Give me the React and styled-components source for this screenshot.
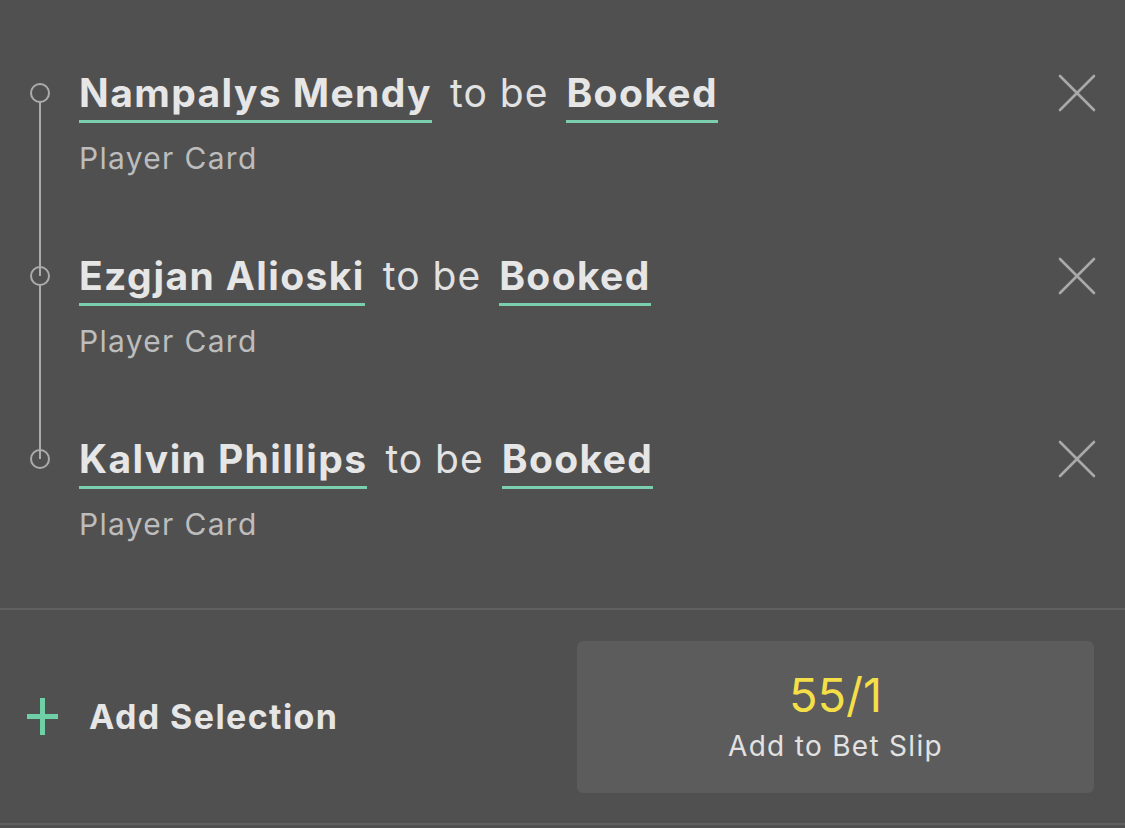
import React from 'react';
import styled, { createGlobalStyle } from 'styled-components';

const GlobalStyle = createGlobalStyle`
  html, body {
    margin: 0;
    padding: 0;
    background: #505050;
  }
  body {
    font-family: Inter, "Noto Sans", "Liberation Sans", sans-serif;
    -webkit-font-smoothing: antialiased;
  }
`;

const selections = [
  { player: 'Nampalys Mendy', market: 'Player Card' },
  { player: 'Ezgjan Alioski', market: 'Player Card' },
  { player: 'Kalvin Phillips', market: 'Player Card' },
];

function App() {
  return (
    <Page>
      <GlobalStyle />
      <List>
        {selections.map((s, i) => (
          <Row key={s.player} last={i === selections.length - 1}>
            <Marker>
              <Dot />
            </Marker>
            <Body>
              <Title>
                <Pick>{s.player}</Pick>
                <Joiner>to be</Joiner>
                <Pick>Booked</Pick>
              </Title>
              <Market>{s.market}</Market>
            </Body>
            <CloseButton aria-label="Remove">
              <svg width="38" height="38" viewBox="0 0 38 38">
                <path d="M2 2 L36 36 M36 2 L2 36" stroke="#a9a9a9" strokeWidth="2.6" strokeLinecap="round" />
              </svg>
            </CloseButton>
          </Row>
        ))}
      </List>
      <Footer>
        <AddSelection>
          <PlusIcon>
            <svg width="31" height="37" viewBox="0 0 31 37">
              <path d="M15.5 0 V37 M0 18.5 H31" stroke="#6fcfa7" strokeWidth="5" />
            </svg>
          </PlusIcon>
          Add Selection
        </AddSelection>
        <BetButton>
          <Odds>55/1</Odds>
          <BetLabel>Add to Bet Slip</BetLabel>
        </BetButton>
      </Footer>
    </Page>
  );
}

export default App;

const Page = styled.div`
  width: 1125px;
  height: 828px;
  background: #505050;
  overflow: hidden;
`;

const List = styled.div`
  height: 537px;
  padding-top: 71px;
  border-bottom: 2px solid #5f5f5f;
  display: flex;
  flex-direction: column;
`;

const Row = styled.div`
  position: relative;
  display: flex;
  align-items: flex-start;
  height: 183px;
  flex-shrink: 0;
  ${p => !p.last && `
    &::after {
      content: '';
      position: absolute;
      left: 39px;
      top: 31px;
      width: 2px;
      height: 174px;
      background: #acacac;
    }
  `}
`;

const Marker = styled.div`
  width: 79px;
  height: 44px;
  display: flex;
  align-items: center;
  padding-left: 30px;
  box-sizing: border-box;
`;

const Dot = styled.span`
  width: 20px;
  height: 20px;
  border: 2px solid #acacac;
  border-radius: 50%;
  box-sizing: border-box;
`;

const Body = styled.div`
  flex: 1;
  display: flex;
  flex-direction: column;
`;

const Title = styled.div`
  display: flex;
  align-items: flex-start;
  gap: 18px;
  line-height: 44px;
  font-size: 39px;
  color: #e6e6e6;
`;

const Pick = styled.span`
  display: inline-block;
  font-weight: 700;
  letter-spacing: 1.4px;
  padding-bottom: 5px;
  border-bottom: 3px solid #7ccfae;
`;

const Joiner = styled.span`
  font-weight: 400;
  letter-spacing: 1px;
  color: #e2e2e2;
`;

const Market = styled.div`
  margin-top: 17px;
  font-size: 30px;
  line-height: 36px;
  color: #bdbdbd;
  letter-spacing: 1.3px;
`;

const CloseButton = styled.button`
  background: none;
  border: none;
  padding: 0;
  margin: 3px 29px 0 0;
  width: 38px;
  height: 38px;
  cursor: pointer;
  display: flex;
`;

const Footer = styled.div`
  height: 213px;
  border-bottom: 2px solid #606060;
  display: flex;
  align-items: center;
  justify-content: space-between;
  padding: 0 31px 0 27px;
`;

const AddSelection = styled.button`
  display: flex;
  align-items: center;
  gap: 31px;
  background: none;
  border: none;
  padding: 0;
  font-family: inherit;
  font-size: 34px;
  font-weight: 700;
  letter-spacing: 1.4px;
  color: #e6e6e6;
  cursor: pointer;
`;

const PlusIcon = styled.span`
  display: flex;
`;

const BetButton = styled.button`
  width: 517px;
  height: 152px;
  background: #5c5c5c;
  border: none;
  border-radius: 6px;
  display: flex;
  flex-direction: column;
  align-items: center;
  justify-content: center;
  gap: 7px;
  padding: 0;
  font-family: inherit;
  cursor: pointer;
`;

const Odds = styled.span`
  font-size: 47px;
  line-height: 52px;
  color: #f5df48;
`;

const BetLabel = styled.span`
  font-size: 28px;
  line-height: 36px;
  color: #e2e2e2;
  letter-spacing: 1.3px;
`;
